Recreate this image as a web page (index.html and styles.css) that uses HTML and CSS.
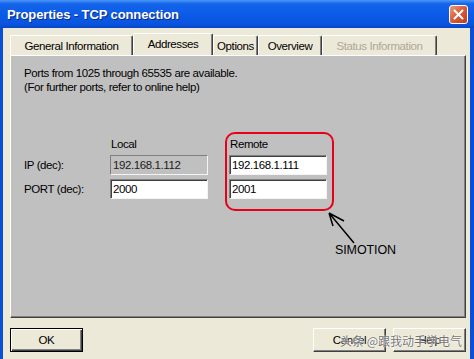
FILE: index.html
```html
<!DOCTYPE html>
<html lang="en">
<head>
    <meta charset="UTF-8">
    <meta name="viewport" content="width=device-width, initial-scale=1.0">
    <title>Properties - TCP connection</title>
    <link rel="stylesheet" href="styles.css">
</head>
<body>

<div class="window">
    <div class="titlebar">
        <span class="title">Properties - TCP connection</span>
        <span class="close-btn" aria-label="Close">
            <svg width="11" height="11" viewBox="0 0 11 11">
                <path d="M1.5 1.5 L9.5 9.5 M9.5 1.5 L1.5 9.5" stroke="#fff" stroke-width="2" stroke-linecap="round"/>
            </svg>
        </span>
    </div>

    <div class="dialog-body">
        <div class="tabs">
            <div class="tab tab-general">General Information</div>
            <div class="tab tab-addresses active">Addresses</div>
            <div class="tab tab-options">Options</div>
            <div class="tab tab-overview">Overview</div>
            <div class="tab tab-status disabled">Status Information</div>
        </div>

        <div class="panel">
            <p class="note">
                Ports from 1025 through 65535 are available.<br>
                (For further ports, refer to online help)
            </p>

            <div class="form">
                <div class="col labels">
                    <div class="col-head"></div>
                    <div class="field-label">IP (dec):</div>
                    <div class="field-label">PORT (dec):</div>
                </div>
                <div class="col local">
                    <div class="col-head">Local</div>
                    <div class="field disabled">192.168.1.112</div>
                    <div class="field">2000</div>
                </div>
                <div class="col remote">
                    <div class="col-head">Remote</div>
                    <div class="field">192.168.1.111</div>
                    <div class="field">2001</div>
                </div>
            </div>

            <!-- hand drawn annotation on top of the panel -->
            <div class="callout">
                <svg class="callout-arrow" width="40" height="40" viewBox="0 0 40 40">
                    <path d="M3 7 L28 37 M3 7 L7 20 M3 7 L18 15" stroke="#000" stroke-width="1.5" fill="none"/>
                </svg>
                <span class="callout-text">SIMOTION</span>
            </div>
        </div>

        <div class="buttons">
            <div class="btn default">OK</div>
            <div class="spacer"></div>
            <div class="btn">Cancel</div>
            <div class="btn">Help</div>
        </div>
    </div>

    <div class="watermark">头条 @跟我动手学电气</div>
</div>

</body>
</html>
```

FILE: styles.css
```css
body {
    margin: 0;
    font-family: "Liberation Sans", Arial, sans-serif;
    font-size: 11.5px;
    letter-spacing: -0.4px;
    color: #000;
}

.window {
    position: relative;
    width: 474px;
    height: 359px;
    display: flex;
    flex-direction: column;
    background: #0a4fd8;
    overflow: hidden;
}

.titlebar {
    height: 28px;
    flex: none;
    display: flex;
    align-items: center;
    justify-content: space-between;
    padding: 0 6px 0 7px;
    background: linear-gradient(#4a96f8 0%, #1464ea 14%, #0a5ae6 55%, #0a55de 85%, #0646c8 100%);
}

.title {
    color: #fff;
    font-weight: bold;
    font-size: 13px;
    letter-spacing: -0.1px;
    text-shadow: 1px 1px #0a2a8c;
}

.close-btn {
    width: 17px;
    height: 17px;
    border: 1px solid #fff;
    border-radius: 3px;
    display: flex;
    align-items: center;
    justify-content: center;
    background: linear-gradient(135deg, #eb9c80 0%, #d9603c 45%, #c23a1b 100%);
}

.dialog-body {
    flex: 1;
    margin: 0 4px 0 3px;
    padding: 7px 4px 0 7px;
    background: #ece9d8;
}

/* tabs */
.tabs {
    display: flex;
    align-items: flex-end;
    height: 20px;
    position: relative;
    z-index: 1;
}

.tab {
    height: 20px;
    box-sizing: border-box;
    border: 1px solid;
    border-color: #fff #404040 transparent #fff;
    border-bottom: none;
    box-shadow: inset -1px 0 #808080;
    border-radius: 2px 2px 0 0;
    background: #ece9d8;
    text-align: center;
    line-height: 20px;
    white-space: nowrap;
}

.tab.active {
    height: 22px;
    line-height: 20px;
}

.tab.disabled {
    color: #aca899;
}

.tab-general { width: 123px; }
.tab-addresses { width: 80px; }
.tab-options { width: 45px; }
.tab-overview { width: 64px; }
.tab-status { width: 115px; }

/* panel */
.panel {
    position: relative;
    height: 263px;
    box-sizing: border-box;
    padding: 10px 13px 0;
    background: #c0c0c0;
    border: 1px solid;
    border-color: #fff #404040 #404040 #fff;
    box-shadow: inset -1px -1px #808080;
}

.note {
    margin: 0;
    line-height: 14px;
}

.form {
    display: flex;
    align-items: flex-start;
    margin-top: 38px;
}

.col {
    display: flex;
    flex-direction: column;
    padding-top: 5px;
}

.col-head {
    height: 15px;
    line-height: 15px;
    margin-bottom: 3px;
    padding-left: 1px;
}

.col .field + .field,
.col .field-label + .field-label {
    margin-top: 4px;
}

.labels {
    width: 86px;
}

.field-label {
    height: 20px;
    line-height: 20px;
}

.local {
    width: 98px;
}

.remote {
    margin-left: 17px;
    padding: 3px 5px 10px 2px;
    border: 2px solid #e6001a;
    border-radius: 10px;
}

.field {
    width: 98px;
    height: 20px;
    box-sizing: border-box;
    padding-left: 2px;
    line-height: 18px;
    background: #fff;
    border: 1px solid;
    border-color: #808080 #f4f4f4 #f4f4f4 #808080;
    box-shadow: inset 1px 1px #404040;
}

.field.disabled {
    background: #c0c0c0;
    color: #222;
    box-shadow: none;
}

/* annotation */
.callout {
    position: absolute;
    left: 315px;
    top: 150px;
    width: 90px;
    height: 60px;
}

.callout-arrow {
    position: absolute;
    left: 0;
    top: 0;
}

.callout-text {
    position: absolute;
    left: 9px;
    top: 37px;
    font-size: 12.5px;
    letter-spacing: -0.1px;
}

/* buttons */
.buttons {
    display: flex;
    gap: 7px;
    margin-top: 10px;
}

.spacer {
    flex: 1;
}

.btn {
    width: 73px;
    height: 24px;
    box-sizing: border-box;
    text-align: center;
    line-height: 22px;
    background: #ece9d8;
    border: 1px solid;
    border-color: #fff #404040 #404040 #fff;
    box-shadow: inset -1px -1px #808080;
}

.btn.default {
    border-color: #000;
    box-shadow: inset 1px 1px #fff, inset -1px -1px #404040, inset -2px -2px #808080;
}

.watermark {
    position: absolute;
    left: 340px;
    top: 332px;
    font-family: "Noto Sans CJK SC", sans-serif;
    font-size: 12px;
    letter-spacing: 0;
    color: rgba(70, 70, 70, 0.75);
    text-shadow: 0 0 2px #fff, 0 0 1px #fff;
}
```
